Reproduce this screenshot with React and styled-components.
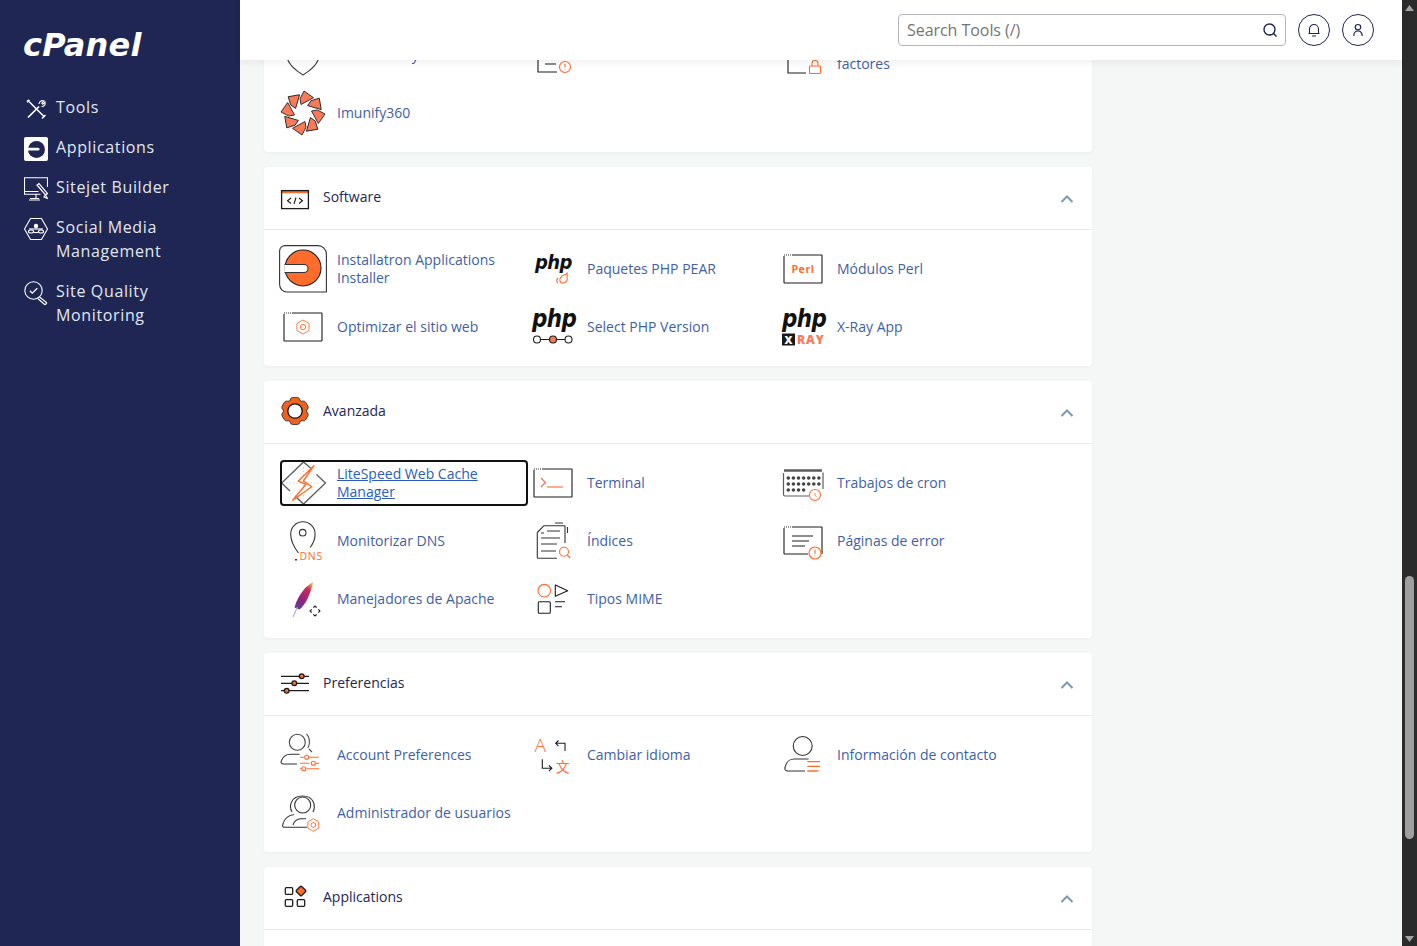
import React from 'react';
import styled, { createGlobalStyle } from 'styled-components';

const INK = '#1c1c1c';
const GREY = '#5c5c5c';
const ORANGE = '#ff6c2c';
const SALMON = '#fa7a58';

const GlobalStyle = createGlobalStyle`
  html, body {
    margin: 0;
    height: 100%;
    overflow: hidden;
  }
  body {
    font-family: "Open Sans", "Liberation Sans", sans-serif;
    background: #f5f6f6;
  }
  * { box-sizing: border-box; }
`;

const Page = styled.div`
  display: flex;
  width: 1417px;
  height: 946px;
  overflow: hidden;
`;

const Sidebar = styled.nav`
  flex: 0 0 240px;
  background: #1f2654;
  padding-top: 24px;
`;

const LogoWrap = styled.div`
  height: 63px;
  padding-left: 23px;
`;

const LogoText = styled.span`
  display: block;
  font-family: "DejaVu Sans", sans-serif;
  font-size: 32px;
  font-weight: 700;
  font-style: italic;
  line-height: 42px;
  letter-spacing: 0.2px;
  color: #fff;
`;

const NavItem = styled.a`
  display: flex;
  align-items: flex-start;
  gap: 8px;
  padding: 8px 24px;
  width: 200px;
  font-size: 16px;
  line-height: 24px;
  letter-spacing: 0.64px;
  color: #e2e7ef;
`;

const NavIcon = styled.span`
  flex: 0 0 24px;
  height: 22px;
  margin-top: 2px;
  display: block;
  svg { display: block; }
`;

const Main = styled.div`
  flex: 1;
  min-width: 0;
  display: flex;
  flex-direction: column;
`;

const TopBar = styled.header`
  position: relative;
  z-index: 1;
  flex: 0 0 60px;
  display: flex;
  align-items: center;
  justify-content: flex-end;
  gap: 12px;
  padding-right: 28px;
  background: #fff;
  box-shadow: 0 2px 8px rgba(0, 0, 0, 0.07);
`;

const SearchBox = styled.div`
  width: 388px;
  height: 32px;
  display: flex;
  align-items: center;
  justify-content: space-between;
  padding: 0 7px 0 8px;
  border: 1px solid #b4b4c2;
  border-radius: 4px;
  background: #fff;
`;

const Placeholder = styled.span`
  font-size: 16px;
  letter-spacing: -0.05px;
  color: #757575;
`;

const RoundButton = styled.button`
  width: 32px;
  height: 32px;
  padding: 0;
  display: flex;
  align-items: center;
  justify-content: center;
  border: 1px solid #1f2654;
  border-radius: 50%;
  background: #fff;
`;

const Content = styled.main`
  flex: 1;
  min-height: 0;
  overflow: hidden;
  display: flex;
  flex-direction: column;
  gap: 15px;
  padding-left: 24px;
`;

const Card = styled.section`
  flex: none;
  width: 828px;
  margin-top: ${props => (props.$clipped ? '-44px' : '0')};
  background: #fff;
  border-radius: 4px;
  box-shadow: 0 1px 3px rgba(0, 0, 0, 0.04);
`;

const CardHeader = styled.div`
  height: 63px;
  display: flex;
  align-items: center;
  gap: 12px;
  padding: 0 18px 2px 15px;
  border-bottom: 1px solid #e4e8f0;
`;

const HeaderIcon = styled.span`
  flex: 0 0 32px;
  height: 32px;
  svg { display: block; }
`;

const CardTitle = styled.h2`
  flex: 1;
  margin: 0;
  font-size: 14px;
  font-weight: 400;
  line-height: 20px;
  color: #1f2654;
`;

const Chevron = styled.span`
  display: block;
  height: 12px;
  margin-top: 4px;
  svg { display: block; }
`;

const ItemGrid = styled.div`
  display: grid;
  grid-template-columns: repeat(3, 250px);
  row-gap: 10px;
  min-height: 30px;
  padding: 15px 0 15px 15px;
`;

const Item = styled.a`
  height: 48px;
  display: flex;
  align-items: center;
  gap: 10px;
  border-radius: 5px;
  outline: ${props => (props.$focused ? '2px solid #111' : 'none')};
  outline-offset: -3px;
`;

const ItemIcon = styled.span`
  flex: 0 0 48px;
  height: 48px;
  svg { display: block; }
`;

const ItemLabel = styled.span`
  max-width: 180px;
  font-size: 14px;
  line-height: 18px;
  color: ${props => (props.$focused ? '#2b5cb8' : '#3f5fa3')};
  text-decoration: ${props => (props.$focused ? 'underline' : 'none')};
`;

const Scrollbar = styled.div`
  flex: 0 0 15px;
  display: flex;
  flex-direction: column;
  background: #2b2b2b;
`;

const ScrollArrow = styled.div`
  flex: 0 0 15px;
  display: flex;
  align-items: center;
  justify-content: center;
  svg { display: block; }
`;

const ScrollTrack = styled.div`
  flex: 1;
  padding: 561px 3px 0;
`;

const ScrollThumb = styled.div`
  height: 263px;
  border-radius: 5px;
  background: #9f9f9f;
`;

const Svg48 = ({ children }) => (
  <svg width="48" height="48" viewBox="0 0 48 48" fill="none" stroke={INK} strokeWidth="1.1">
    {children}
  </svg>
);

const Svg32 = ({ children }) => (
  <svg width="32" height="32" viewBox="0 0 32 32" fill="none" stroke={INK} strokeWidth="1.3">
    {children}
  </svg>
);

const Frame = ({ bottom = 38, bottomEnd = 43 }) => (
  <>
    <path d="M5 10h1M7 10h1M9 10h1M11 10h1" strokeWidth="0.9" />
    <path d={`M13 10H42.500a.5.5 0 0 1 .5.5V${bottom}M${bottomEnd} ${bottom}H5.500a.5.5 0 0 1-.5-.5V11`} />
  </>
);

const Hexagon = ({ cx, cy, r = 6, color = ORANGE }) => {
  const pts = [0, 60, 120, 180, 240, 300]
    .map(a => {
      const rad = ((a - 90) * Math.PI) / 180;
      return `${cx + r * Math.cos(rad)},${cy + r * Math.sin(rad)}`;
    })
    .join(' ');
  return (
    <>
      <polygon points={pts} stroke={color} strokeWidth="0.9" strokeLinejoin="round" />
      <circle cx={cx} cy={cy} r={r * 0.38} stroke={color} strokeWidth="0.9" />
    </>
  );
};

// wide bold italic, stretched upward a little to get the php logo proportions
const PhpMark = ({ x, y, size, stretch = 1 }) => (
  <text
    transform={`translate(${x} ${y}) scale(1 ${stretch})`}
    fontFamily="DejaVu Sans, sans-serif"
    fontWeight="700"
    fontStyle="italic"
    fontSize={size}
    letterSpacing="-0.6"
    fill="#111"
    stroke="none"
  >
    php
  </text>
);

const ShieldIcon = () => (
  <Svg48>
    <path d="M8 10L24 5l16 5v14c0 9-8 15-16 20C16 39 8 33 8 24z" stroke="#444" />
  </Svg48>
);

const StatusIcon = () => (
  <Svg48>
    <path d="M9 20v21h19M16 33h11" />
    <circle cx="36" cy="36" r="5.500" stroke={ORANGE} />
    <path d="M36 33v3.500M36 38v.6" stroke={ORANGE} />
  </Svg48>
);

const TwoFactorIcon = () => (
  <Svg48>
    <path d="M9 20v22h18" />
    <rect x="30.500" y="35" width="11" height="7.500" rx="1" stroke={ORANGE} />
    <path d="M33 35v-2.500a3 3 0 0 1 6 0V35" stroke={ORANGE} />
  </Svg48>
);

const ImunifyIcon = () => (
  <Svg48>
    {[0, 45, 90, 135, 180, 225, 270, 315].map(a => (
      <polygon
        key={a}
        points="25,2 34.500,8.700 22,15.500 21,9.700"
        transform={`rotate(${a} 24 24)`}
        fill={SALMON}
        stroke="#222"
        strokeWidth="0.9"
        strokeLinejoin="round"
      />
    ))}
  </Svg48>
);

const InstallatronIcon = () => (
  <Svg48>
    <path d="M6 .6H39a8.400 8.400 0 0 1 8.400 8.400v38H8A7.400 7.400 0 0 1 .6 39.600V6A5.400 5.400 0 0 1 6 .6z" stroke="#333" />
    <circle cx="24" cy="23" r="18" fill={ORANGE} stroke="#222" />
    <path d="M5.500 19.500H25a4 4 0 0 1 0 8H5.500" fill="#fff" stroke="#333" />
  </Svg48>
);

const PhpPearIcon = () => (
  <Svg48>
    <PhpMark x={6} y={24} size={18} stretch={1.05} />
    <path d="M33 31c2-1 3.500-1 5-3 .5 2 .5 3 0 4 1 3-1 6-4 6-3.500 0-4.500-4-1-7zM29 33c-2 2-1.500 4 0 5" stroke={ORANGE} />
  </Svg48>
);

const PerlIcon = () => (
  <Svg48>
    <Frame />
    <text x="24" y="28" textAnchor="middle" fontFamily="Open Sans, sans-serif" fontWeight="700" fontSize="10.500" letterSpacing="0.6" fill={ORANGE} stroke="none">
      Perl
    </text>
  </Svg48>
);

const OptimizeIcon = () => (
  <Svg48>
    <Frame />
    <Hexagon cx={24} cy={24} r={7} />
  </Svg48>
);

const SelectPhpIcon = () => (
  <Svg48>
    <PhpMark x={3} y={24} size={21.500} stretch={1.15} />
    <path d="M12 36.500h8.500M27.500 36.500h8.500" />
    <circle cx="8" cy="36.500" r="3.500" />
    <circle cx="24" cy="36.500" r="3.500" fill={SALMON} />
    <circle cx="39.500" cy="36.500" r="3.500" />
  </Svg48>
);

const XRayIcon = () => (
  <Svg48>
    <PhpMark x={3} y={24} size={21.500} stretch={1.15} />
    <rect x="3" y="30.500" width="13" height="12" fill="#1a1a1a" stroke="none" />
    <text x="9.500" y="40.500" textAnchor="middle" fontFamily="Open Sans, sans-serif" fontWeight="800" fontSize="11" fill="#fff" stroke="none">
      X
    </text>
    <text x="18" y="41" fontFamily="Open Sans, sans-serif" fontWeight="800" fontSize="12" letterSpacing="0.9" fill={SALMON} stroke="none">
      RAY
    </text>
  </Svg48>
);

const LiteSpeedIcon = () => (
  <Svg48>
    <path d="M32 9.500L24.500 3 2.700 24l8.300 8M16 37l8.500 8 22-21-9-8.500" stroke={GREY} strokeWidth="1.300" />
    <path d="M7 24h35M24.500 8v32" stroke="#bbb" strokeWidth="0.7" strokeDasharray="1.500 2" />
    <polygon points="35,6.700 19.300,22 27,25.300 13.700,41.300 32.700,27.700 24.300,22" stroke={ORANGE} strokeWidth="1.400" strokeLinejoin="round" fill="#fff" />
  </Svg48>
);

const TerminalIcon = () => (
  <Svg48>
    <Frame />
    <path d="M12 19l4.500 4.500L12 28" stroke={ORANGE} />
    <path d="M18 28h16" stroke={ORANGE} />
  </Svg48>
);

const CronIcon = () => (
  <Svg48>
    <path d="M4.500 14V35.500c0 1 .5 1.500 1.500 1.500h24M44 30V13.500" stroke={GREY} strokeWidth="1.200" />
    <path d="M5 11.500h38" stroke={GREY} strokeWidth="2.400" />
    {[19, 25, 31].map((y, r) =>
      [0, 1, 2, 3, 4, 5, 6].slice(0, r === 2 ? 4 : 7).map(i => (
        <circle key={`${r}-${i}`} cx={9.300 + 5.100 * i} cy={y} r="1.800" fill="#444" stroke="none" />
      ))
    )}
    <circle cx="36" cy="36" r="5.500" fill="#fff" stroke={ORANGE} />
    <path d="M36 34v2.500l1.500 1" stroke={ORANGE} strokeWidth="0.800" />
  </Svg48>
);

const DnsIcon = () => (
  <Svg48>
    <path d="M19.500 36C14 29 11.700 23.500 11.700 17a12.200 12.200 0 0 1 24.400 0c0 5-1.500 9-5 13.500" stroke="#333" />
    <circle cx="23.700" cy="15.700" r="3.300" stroke="#333" />
    <path d="M16 42.700h2" stroke="#333" strokeWidth="1.600" />
    <text x="20.500" y="42.500" fontFamily="Open Sans, sans-serif" fontSize="10.500" letterSpacing="0.7" fill={ORANGE} stroke="none">
      DNS
    </text>
  </Svg48>
);

const IndexIcon = () => (
  <Svg48>
    <path d="M15 8.700h20.500a.5.5 0 0 1 .5.500V26M8.300 15.500V40.500c0 .5.300.8.800.8H28M15 8.700l-6.700 6.800" stroke="#333" />
    <path d="M26 6h8M38.500 10v6" stroke="#333" />
    <path d="M15 16h-3M18 14h13M12 21h19M12 27h16M12 34h15" stroke="#333" />
    <circle cx="35" cy="34.700" r="4.500" stroke={ORANGE} />
    <path d="M38.200 38l3 3" stroke={ORANGE} />
  </Svg48>
);

const ErrorIcon = () => (
  <Svg48>
    <Frame bottom={37} bottomEnd={29} />
    <path d="M13 19h21M13 24h17M13 29h13" />
    <circle cx="36" cy="36" r="6" fill="#fff" stroke={ORANGE} />
    <path d="M36 32.500v4.500M36 38.500v.8" stroke={ORANGE} />
  </Svg48>
);

const ApacheIcon = () => (
  <Svg48>
    <defs>
      <linearGradient id="feather" x1="0.800" y1="0" x2="0.200" y2="1">
        <stop offset="0" stopColor="#f6a13a" />
        <stop offset="0.220" stopColor="#c9295e" />
        <stop offset="0.700" stopColor="#8a2380" />
        <stop offset="1" stopColor="#5f3c90" />
      </linearGradient>
    </defs>
    <path d="M34 7.500c-6 2-15 12-18.500 25l5 2c6-5 11-15 13.500-27z" fill="url(#feather)" stroke="none" />
    <path d="M18.500 32l-4.500 10" stroke="#b9a3cc" />
    <path d="M34.300 32.700L36 31l1.700 1.700M39.300 34.300L41 36l-1.700 1.700M37.700 39.300L36 41l-1.700-1.700M32.700 37.700L31 36l1.700-1.700" strokeWidth="1.100" />
  </Svg48>
);

const MimeIcon = () => (
  <Svg48>
    <circle cx="15.300" cy="15.700" r="6.300" stroke={ORANGE} />
    <polygon points="26.300,10 38.700,15.700 26.300,21.300" strokeLinejoin="round" />
    <rect x="9.300" y="26.700" width="12" height="11.600" rx="1" />
    <path d="M26 26.700h10M26 31.700h7" />
  </Svg48>
);

const AccountIcon = () => (
  <Svg48>
    <circle cx="18.300" cy="11.300" r="8" stroke="#444" />
    <path d="M27.500 3c3 3 4 8 1.500 14" stroke="#555" />
    <path d="M30 18l3 3" stroke="#555" />
    <path d="M18 33H4.500C2.500 33 1.500 31.500 2.500 29.500c1.500-4 5-6.200 9-6.200h9" stroke="#333" />
    <path d="M21 26.300h4M30 26.300h10M21 32.300h9.500M36.500 32.300h3.500M21 37.700h1.500M27.500 37.700H40" stroke={ORANGE} />
    <circle cx="27.700" cy="26.300" r="2" stroke={ORANGE} />
    <circle cx="34.300" cy="32.300" r="2" stroke={ORANGE} />
    <circle cx="24.800" cy="37.700" r="2" stroke={ORANGE} />
  </Svg48>
);

const LanguageIcon = () => (
  <Svg48>
    <text x="5.500" y="21" fontFamily="Open Sans, sans-serif" fontWeight="300" fontSize="19" fill={ORANGE} stroke="none">
      A
    </text>
    <path d="M36 20v-7.700h-9M29.500 9.500l-2.800 2.800 2.800 2.800M13.300 28.300v9h9.400M20 34.500l2.800 2.800-2.800 2.800" />
    <text x="27" y="40.500" fontFamily="Noto Sans CJK SC, sans-serif" fontWeight="400" fontSize="13.500" fill={ORANGE} stroke="none">
      文
    </text>
  </Svg48>
);

const ContactIcon = () => (
  <Svg48>
    <circle cx="23.700" cy="15" r="9.500" stroke="#333" />
    <path d="M26 40H9c-2.500 0-3.500-1.500-3-3.500 1-5 4.500-8.500 9-8.500h14.500" stroke="#333" />
    <path d="M28.300 30.700H41M28.300 35.300H41M28.300 40H39.500" stroke={ORANGE} strokeWidth="1.300" />
  </Svg48>
);

const AdminIcon = () => (
  <Svg48>
    <circle cx="23.700" cy="16" r="8" stroke="#333" />
    <path d="M13 23c-3-5-2-16 10.700-16 11.300 0 13.300 10 10.300 16" stroke="#333" />
    <path d="M28 38.300H6c-2 0-2.800-1-2.200-3 1.500-6 6-9 11.200-9.800M14 36c1-4 4-6 8-6.300h5" stroke="#333" />
    <Hexagon cx={34.300} cy={36} r={6.300} />
  </Svg48>
);

const SoftwareIcon = () => (
  <Svg32>
    <rect x="2.600" y="9.600" width="26.800" height="18" />
    <rect x="2" y="9" width="28" height="3.200" fill={ORANGE} stroke="none" />
    <path d="M2.600 12.500V9.600h26.800v3" />
    <path d="M12 17l-3.500 2.700L12 22.500M20 17l3.500 2.700-3.500 2.800M17 16.500l-2 6.500" strokeWidth="1.100" />
  </Svg32>
);

const GearIcon = () => {
  const pts = [];
  for (let i = 0; i < 6; i++) {
    const base = i * 60 - 90;
    [[-17, 13.500], [-10, 13.800], [10, 13.800], [17, 13.500], [30, 11.300]].forEach(([d, r]) => {
      const rad = ((base + d) * Math.PI) / 180;
      pts.push(`${16 + r * Math.cos(rad)},${16 + r * Math.sin(rad)}`);
    });
  }
  return (
    <Svg32>
      <polygon points={pts.join(' ')} fill="#f0611f" stroke="#222" strokeLinejoin="round" strokeWidth="0.8" />
      <circle cx="16" cy="16" r="7.200" fill="#fff" stroke="#111" strokeWidth="1.300" />
    </Svg32>
  );
};

const SlidersIcon = () => (
  <Svg32>
    <path d="M2 9.300h28M2 16.300h28M2 23.700h28" />
    <circle cx="22.700" cy="9.300" r="2.400" fill={ORANGE} />
    <circle cx="15.300" cy="16.300" r="2.400" fill={ORANGE} />
    <circle cx="7.700" cy="23.700" r="2.400" fill={ORANGE} />
  </Svg32>
);

const AppsIcon = () => (
  <Svg32>
    <rect x="6.300" y="6.700" width="7.400" height="6.600" rx="1" />
    <rect x="6.300" y="18.700" width="7.400" height="6.600" rx="1" />
    <rect x="18.300" y="18.700" width="7.400" height="6.600" rx="1" />
    <rect x="18.300" y="6.300" width="7.400" height="7.400" rx="1" transform="rotate(45 22 10)" fill={ORANGE} />
  </Svg32>
);

const NavSvg = ({ children }) => (
  <svg width="24" height="24" viewBox="0 0 24 24" fill="none" stroke="#fff" strokeWidth="1.100">
    {children}
  </svg>
);

const NavTools = () => (
  <NavSvg>
    <path d="M5 4.500L20 19.500M18 21.500l3.500-3.500" strokeWidth="1.500" />
    <path d="M3.500 5.500l2-2L4.500 2.800 3 3.800z" fill="#fff" strokeWidth="0.700" />
    <path d="M4 20.500L15 9.500" strokeWidth="1.700" />
    <path d="M15 7c.2-2.500 2.500-4 5-3l-2.200 2.200 1 1L21 5c.8 2.500-1 4.800-3.500 4.500" strokeWidth="1.100" />
  </NavSvg>
);

const NavApplications = () => (
  <NavSvg>
    <rect x="0" y="0" width="24" height="24" rx="2" fill="#fff" stroke="none" />
    <circle cx="12.500" cy="12.500" r="8.500" fill="#1f2654" stroke="none" />
    <rect x="2.500" y="10.800" width="13" height="2.800" rx="1.400" fill="#fff" stroke="none" />
  </NavSvg>
);

const NavSitejet = () => (
  <NavSvg>
    <path d="M23.500 10V.8H.5v16.500h16M.5 14.500h14M12 17.500v4M6 21.500h9M5 23h11" />
    <path d="M13 8l8.500 10 2-1.500L15 6.500l-2 1.500zM21.500 18l2 3.500-3.500-1.500z" strokeWidth="1.200" />
  </NavSvg>
);

const NavSocial = () => (
  <NavSvg>
    <polygon points="6.500,1.500 17.500,1.500 23.500,12 17.500,22.500 6.500,22.500 .5,12" strokeLinejoin="round" />
    <circle cx="12" cy="9" r="2.200" fill="#fff" stroke="none" />
    <path d="M5 12h14" strokeWidth="1.200" />
    <ellipse cx="7" cy="14.500" rx="2.600" ry="1.500" />
    <ellipse cx="17" cy="14.500" rx="2.600" ry="1.500" />
    <path d="M10 15.500h4" />
  </NavSvg>
);

const NavQuality = () => (
  <NavSvg>
    <circle cx="9.500" cy="9.500" r="8.700" />
    <path d="M5.800 9.700l2.500 2.500 5-5" strokeWidth="1.300" />
    <path d="M15.500 16l7 5.500a1.500 1.500 0 0 1-2.200 1.700l-6.500-5.700" strokeWidth="1.200" />
  </NavSvg>
);

const NAV_ITEMS = [
  { label: 'Tools', icon: NavTools },
  { label: 'Applications', icon: NavApplications },
  { label: 'Sitejet Builder', icon: NavSitejet },
  { label: 'Social Media Management', icon: NavSocial },
  { label: 'Site Quality Monitoring', icon: NavQuality },
];

const SECTIONS = [
  {
    clipped: true,
    items: [
      { label: 'ModSecurity', icon: ShieldIcon },
      { label: 'Estado de SSL', icon: StatusIcon },
      { label: 'Autenticación de dos factores', icon: TwoFactorIcon },
      { label: 'Imunify360', icon: ImunifyIcon },
    ],
  },
  {
    title: 'Software',
    icon: SoftwareIcon,
    items: [
      { label: 'Installatron Applications Installer', icon: InstallatronIcon },
      { label: 'Paquetes PHP PEAR', icon: PhpPearIcon },
      { label: 'Módulos Perl', icon: PerlIcon },
      { label: 'Optimizar el sitio web', icon: OptimizeIcon },
      { label: 'Select PHP Version', icon: SelectPhpIcon },
      { label: 'X-Ray App', icon: XRayIcon },
    ],
  },
  {
    title: 'Avanzada',
    icon: GearIcon,
    items: [
      { label: 'LiteSpeed Web Cache Manager', icon: LiteSpeedIcon, focused: true },
      { label: 'Terminal', icon: TerminalIcon },
      { label: 'Trabajos de cron', icon: CronIcon },
      { label: 'Monitorizar DNS', icon: DnsIcon },
      { label: 'Índices', icon: IndexIcon },
      { label: 'Páginas de error', icon: ErrorIcon },
      { label: 'Manejadores de Apache', icon: ApacheIcon },
      { label: 'Tipos MIME', icon: MimeIcon },
    ],
  },
  {
    title: 'Preferencias',
    icon: SlidersIcon,
    items: [
      { label: 'Account Preferences', icon: AccountIcon },
      { label: 'Cambiar idioma', icon: LanguageIcon },
      { label: 'Información de contacto', icon: ContactIcon },
      { label: 'Administrador de usuarios', icon: AdminIcon },
    ],
  },
  {
    title: 'Applications',
    icon: AppsIcon,
    items: [],
  },
];

const ToolCard = ({ section }) => {
  const { title, icon: Icon, items, clipped } = section;
  return (
    <Card $clipped={clipped}>
      {title && (
        <CardHeader>
          <HeaderIcon>
            <Icon />
          </HeaderIcon>
          <CardTitle>{title}</CardTitle>
          <Chevron>
            <svg width="14" height="12" viewBox="0 0 14 12" fill="none" stroke="#7b98b8" strokeWidth="2">
              <path d="M1.500 9L7 3.500 12.500 9" />
            </svg>
          </Chevron>
        </CardHeader>
      )}
      <ItemGrid>
        {items.map(({ label, icon: ItemSvg, focused }) => (
          <Item key={label} $focused={focused}>
            <ItemIcon>
              <ItemSvg />
            </ItemIcon>
            <ItemLabel $focused={focused}>{label}</ItemLabel>
          </Item>
        ))}
      </ItemGrid>
    </Card>
  );
};

const App = () => (
  <Page>
    <GlobalStyle />
    <Sidebar>
      <LogoWrap>
        <LogoText>cPanel</LogoText>
      </LogoWrap>
      {NAV_ITEMS.map(({ label, icon: Icon }) => (
        <NavItem key={label}>
          <NavIcon>
            <Icon />
          </NavIcon>
          {label}
        </NavItem>
      ))}
    </Sidebar>
    <Main>
      <TopBar>
        <SearchBox>
          <Placeholder>Search Tools (/)</Placeholder>
          <svg width="16" height="16" viewBox="0 0 16 16" fill="none" stroke="#1f2654" strokeWidth="1.400">
            <circle cx="7.500" cy="7.500" r="5.500" />
            <path d="M11.500 11.500l3 3" />
          </svg>
        </SearchBox>
        <RoundButton aria-label="Notifications">
          <svg width="14" height="14" viewBox="0 0 14 14" fill="none" stroke="#1f2654" strokeWidth="1.100">
            <path d="M2.500 10.500V6a4.500 4.500 0 0 1 9 0v4.500zM1.500 10.500h11M5 13h4" />
          </svg>
        </RoundButton>
        <RoundButton aria-label="User">
          <svg width="14" height="14" viewBox="0 0 14 14" fill="none" stroke="#1f2654" strokeWidth="1.200">
            <circle cx="7" cy="4.200" r="2.700" />
            <path d="M2.800 13c0-3 1.500-5 4.200-5s4.200 2 4.200 5" />
          </svg>
        </RoundButton>
      </TopBar>
      <Content>
        {SECTIONS.map(section => (
          <ToolCard key={section.title || 'security'} section={section} />
        ))}
      </Content>
    </Main>
    <Scrollbar>
      <ScrollArrow>
        <svg width="9" height="6" viewBox="0 0 9 6" fill="#a3a3a3">
          <polygon points="4.500,0 9,6 0,6" />
        </svg>
      </ScrollArrow>
      <ScrollTrack>
        <ScrollThumb />
      </ScrollTrack>
      <ScrollArrow>
        <svg width="9" height="6" viewBox="0 0 9 6" fill="#a3a3a3">
          <polygon points="0,0 9,0 4.500,6" />
        </svg>
      </ScrollArrow>
    </Scrollbar>
  </Page>
);

export default App;
